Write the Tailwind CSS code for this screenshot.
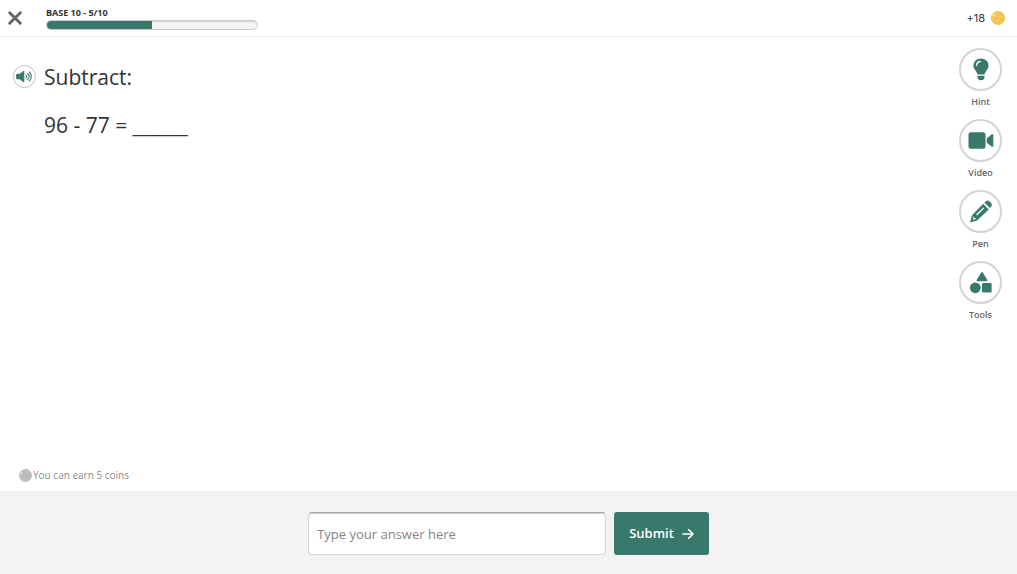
<!DOCTYPE html>
<html lang="en">
<head>
    <meta charset="UTF-8">
    <meta name="viewport" content="width=device-width, initial-scale=1.0">
    <title>Base 10 practice</title>
    <script src="https://cdn.jsdelivr.net/npm/@tailwindcss/browser@4"></script>
</head>
<body class="min-h-screen flex flex-col bg-white text-[#333] font-['Open_Sans','Noto_Sans',sans-serif]">
    <header class="h-[37px] flex items-center border-b border-[#ececec] pl-2 pr-3">
        <button type="button" aria-label="Close" class="w-[14px] h-[14px] text-[#666]">
            <svg viewBox="0 0 14 14" class="block w-full h-full" fill="none" stroke="currentColor" stroke-width="2.9" stroke-linecap="round"><path d="M1.7 1.7 12.3 12.3M12.3 1.7 1.7 12.3"/></svg>
        </button>
        <div class="ml-6 w-[212px]">
            <span id="progressLabel" class="block text-[9px] leading-3 font-bold">BASE 10 - 5/10</span>
            <div role="progressbar" aria-labelledby="progressLabel" aria-valuenow="5" aria-valuemin="0" aria-valuemax="10" class="mt-px h-[10px] rounded-full bg-[#f3f3f3] border border-[#ccc] shadow-[inset_0_1px_1px_#0002] overflow-hidden">
                <div class="h-full bg-[#38796b]" style="width: 50%"></div>
            </div>
        </div>
        <div class="ml-auto flex items-center gap-[6px] text-[11px] font-['Inter',sans-serif]">
            <span>+18</span>
            <svg viewBox="0 0 14 14" class="w-[14px] h-[14px]"><circle cx="7" cy="7" r="6.6" fill="#f7c854" stroke="#e5b24a" stroke-width=".7"/><circle cx="7.2" cy="7.2" r="4.8" fill="#f4c24f"/><path d="M4.5 6c1-1 4-1.3 5.2-.4M4.8 9c1.5.7 3.2.6 4.5-.2" fill="none" stroke="#f9d675" stroke-width=".8"/><circle cx="2.7" cy="4" r="1" fill="#fff4cc"/></svg>
        </div>
    </header>

    <main class="flex-1 flex">
        <section class="flex-1 flex flex-col">
            <div class="flex gap-2 pl-[13px] pt-[26px]">
                <button type="button" aria-label="Listen" class="mt-[2px] w-[23px] h-[23px] shrink-0 rounded-full border border-[#bfbfbf] flex items-center justify-center text-[#38796b]">
                    <svg viewBox="0 0 17 13" class="w-[17px] h-[13px]" fill="none" stroke="currentColor" stroke-linecap="round"><path d="M1 4.3h2.8L7.8 1v11L3.8 8.8H1z" fill="currentColor" stroke-linejoin="round" stroke-width="1"/><path d="M10 5c.8.9.8 2.1 0 3M11.7 3.5c1.7 1.8 1.7 4.2 0 6M13.3 2c2.7 2.6 2.7 6.4 0 9" stroke-width="1.1"/></svg>
                </button>
                <div class="text-[21px] leading-7">
                    <h1>Subtract:</h1>
                    <p class="mt-5">96 - 77 = ______</p>
                </div>
            </div>
            <p class="mt-auto mb-2 pl-[19px] flex items-center gap-[1px] text-[10px] leading-4 text-[#8b8b8b]">
                <svg viewBox="0 0 14 14" class="w-[13px] h-[13px]"><circle cx="7" cy="7" r="6.6" fill="#c3c3c3" stroke="#afafaf" stroke-width=".7"/><circle cx="7.2" cy="7.2" r="4.8" fill="#bbb"/><circle cx="2.7" cy="4.5" r="1" fill="#eee"/></svg>
                You can earn 5 coins
            </p>
        </section>

        <nav class="flex flex-col gap-[9px] pt-[11px] pr-[15px] text-[9px] leading-3 font-semibold text-[#666]">
            <button type="button" class="flex flex-col items-center gap-[5px] pb-[2px]">
                <span class="w-[43px] h-[43px] rounded-full border-2 border-[#d4d4d4] flex items-center justify-center text-[#38796b]">
                    <svg viewBox="0 0 26 26" class="w-[26px] h-[26px]"><path d="M13 1.5C8.7 1.5 5.500 4.600 5.500 8.500c0 2.900 1.700 4.400 3 6.500.5.900.8 1.700 1 2.500h7c.2-.8.5-1.600 1-2.500 1.300-2.100 3-3.600 3-6.500C20.500 4.600 17.300 1.500 13 1.500zM9.500 18.800h7v1.500c0 1.800-1.500 3-3.500 3s-3.500-1.200-3.500-3z" fill="currentColor"/><path d="M8.500 8.300c.2-2.100 1.600-3.500 3.800-3.800" fill="none" stroke="#fff" stroke-width="1.300" stroke-linecap="round"/></svg>
                </span>
                Hint
            </button>
            <button type="button" class="flex flex-col items-center gap-[5px] pb-[2px]">
                <span class="w-[43px] h-[43px] rounded-full border-2 border-[#d4d4d4] flex items-center justify-center text-[#38796b]">
                    <svg viewBox="0 0 26 26" class="w-[26px] h-[26px]" fill="currentColor"><rect x=".5" y="4.200" width="17" height="16.500" rx="2.500"/><path d="M18.700 10.500 23.500 6.500c.8-.6 1.800-.2 1.800.8v10.400c0 1-1 1.400-1.800.8L18.700 14.500z"/></svg>
                </span>
                Video
            </button>
            <button type="button" class="flex flex-col items-center gap-[5px] pb-[2px]">
                <span class="w-[43px] h-[43px] rounded-full border-2 border-[#d4d4d4] flex items-center justify-center text-[#38796b]">
                    <svg viewBox="0 0 26 26" class="w-[26px] h-[26px]" fill="currentColor"><path d="m16.300 3.500 1.700-1.300c1.200-.9 2.300-.8 3.300.1l1.800 1.800c1 1 1.100 2.200.2 3.300L21.900 9zM15.100 4.700l5.700 5.700L9 21.400 2 23.500l2.100-7.200z"/><path d="m9 15.500 6.500-6.300" fill="none" stroke="#fff" stroke-width="1.300" stroke-linecap="round"/><path d="m5.500 17 .9 1.900 1.900.8-3.200 1.200z" fill="#fff"/></svg>
                </span>
                Pen
            </button>
            <button type="button" class="flex flex-col items-center gap-[5px] pb-[2px]">
                <span class="w-[43px] h-[43px] rounded-full border-2 border-[#d4d4d4] flex items-center justify-center text-[#38796b]">
                    <svg viewBox="0 0 26 26" class="w-[26px] h-[26px]" fill="currentColor"><path d="M14 3 18.500 10.300H9.500z" stroke="currentColor" stroke-width="1.800" stroke-linejoin="round"/><circle cx="7.300" cy="17.800" r="5.400"/><rect x="14" y="13" width="9.600" height="9.600" rx="1.300"/></svg>
                </span>
                Tools
            </button>
        </nav>
    </main>

    <footer class="bg-[#f3f3f3] px-4 pt-[21px] pb-[19px]">
        <form onsubmit="return false;" class="flex justify-center gap-2">
            <input type="text" aria-label="Answer" placeholder="Type your answer here"
                class="w-full max-w-[298px] h-[43px] px-2 text-[13px] bg-white border border-[#d6d6d6] border-t-[#a5a5a5] rounded shadow-[inset_0_1px_1px_#0003] placeholder:text-[#858585]">
            <button type="submit" class="h-[43px] px-[15px] flex items-center gap-2 rounded-[3px] bg-[#38796b] text-white text-[13px] font-semibold">
                Submit
                <svg viewBox="0 0 12 12" class="w-3 h-3" fill="none" stroke="currentColor" stroke-width="1.600" stroke-linecap="round" stroke-linejoin="round"><path d="M1 6h10M6.700 1.700 11 6l-4.300 4.300"/></svg>
            </button>
        </form>
    </footer>
</body>
</html>
